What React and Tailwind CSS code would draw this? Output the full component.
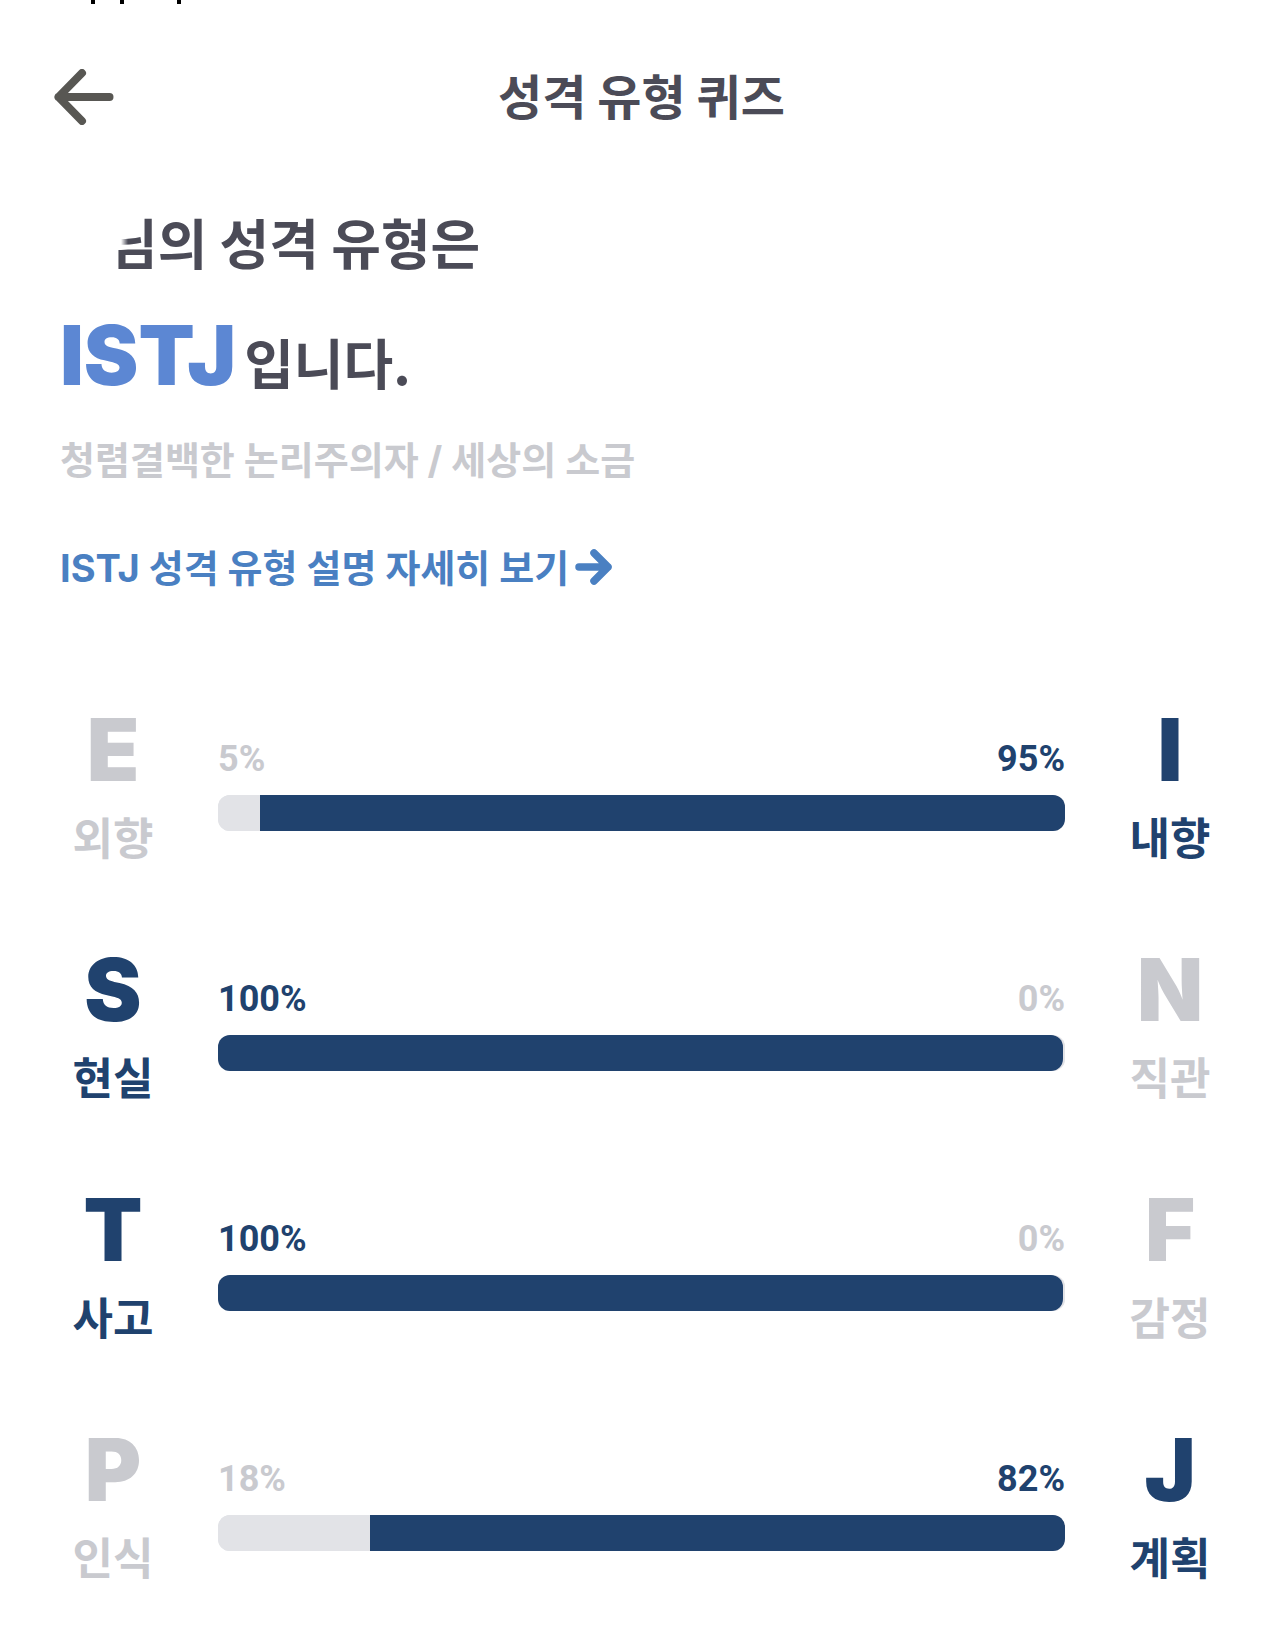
const traits = [
  { left: ["E", "외향", 5], right: ["I", "내향", 95] },
  { left: ["S", "현실", 100], right: ["N", "직관", 0] },
  { left: ["T", "사고", 100], right: ["F", "감정", 0] },
  { left: ["P", "인식", 18], right: ["J", "계획", 82] },
];

function tone(percent) {
  return percent >= 50 ? "text-[#20426e]" : "text-[#c9cacf]";
}

function Side({ letter, label, percent }) {
  return (
    <div className={`flex w-[106px] shrink-0 flex-col items-center ${tone(percent)}`}>
      <span className="font-[Inter,sans-serif] text-[86px] font-black leading-[84px]">{letter}</span>
      <span className="mt-4 text-[44px] font-bold leading-[56px]">{label}</span>
    </div>
  );
}

function TraitRow({ left, right }) {
  const leftFill = left[2] >= 50 ? "bg-[#20426e] rounded-r-xl" : "bg-[#e2e3e7]";
  const rightFill = right[2] >= 50 ? "bg-[#20426e]" : "bg-[#e2e3e7]";
  return (
    <li className="flex items-start gap-[52px]">
      <Side letter={left[0]} label={left[1]} percent={left[2]} />
      <div className="min-w-0 flex-1 pt-[29px]">
        <div className="flex justify-between font-[Roboto,sans-serif] text-[36px] font-bold leading-[44px]">
          <span className={tone(left[2])}>{left[2]}%</span>
          <span className={tone(right[2])}>{right[2]}%</span>
        </div>
        <div className="mt-3.5 flex h-9 overflow-hidden rounded-xl bg-[#e2e3e7]">
          <div className={leftFill} style={{ width: `${left[2]}%` }} />
          <div className={`min-w-0.5 flex-1 ${rightFill}`} />
        </div>
      </div>
      <Side letter={right[0]} label={right[1]} percent={right[2]} />
    </li>
  );
}

export default function App() {
  return (
    <div className="min-h-screen bg-white pb-8 font-['Noto_Sans_CJK_KR',sans-serif] text-[#4b4b57]">
      <svg className="ml-[91px] block" width="90" height="4" viewBox="0 0 90 4" aria-hidden="true">
        <path d="M0 0h4v4h-4zM29 0h4v4h-4zM86 0h4v4h-4z" fill="#000" />
      </svg>
      <header className="grid grid-cols-[60px_1fr_60px] items-center px-[54px] pt-[58px]">
        <button type="button" aria-label="뒤로" className="flex h-16 items-center">
          <svg width="60" height="56" viewBox="0 0 60 56" fill="none" stroke="#585753" strokeWidth="8" strokeLinecap="round" strokeLinejoin="round" aria-hidden="true">
            <path d="M55.500 28H4.500M28 4L4.500 28L28 52" />
            <path d="M4 28L14 18V38Z" fill="#585753" stroke="none" />
          </svg>
        </button>
        <h1 className="pb-1.5 text-center text-[48px] font-bold leading-[64px]">성격 유형 퀴즈</h1>
      </header>

      <main className="px-[60px] pt-[74px]">
        <h2 className="text-[54px] font-bold">
          <span className="relative block pl-12 leading-[72px]">
            님의 성격 유형은
            <span className="absolute left-10 top-0 h-11 w-7 bg-linear-to-r from-white from-75% to-transparent" />
          </span>
          <span className="mt-[30px] flex items-baseline gap-2 leading-[96px]">
            <span className="font-[Inter,sans-serif] text-[82px] font-black text-[#5c87d3]">ISTJ</span>
            <span>입니다.</span>
          </span>
        </h2>
        <p className="mt-[22px] font-[Inter,'Noto_Sans_CJK_KR',sans-serif] text-[38px] font-bold leading-[56px] text-[#c9cacf]">
          청렴결백한 논리주의자 / 세상의 소금
        </p>
        <a href="#istj" className="mt-[52px] inline-flex items-center gap-1.5 font-[Inter,'Noto_Sans_CJK_KR',sans-serif] text-[38px] font-bold leading-[56px] text-[#4a80c2]">
          <span>ISTJ 성격 유형 설명 자세히 보기</span>
          <svg width="38" height="44" viewBox="0 0 38 44" fill="none" stroke="currentColor" strokeWidth="7.5" strokeLinecap="round" strokeLinejoin="round" aria-hidden="true">
            <path d="M4 21H33M19 7L33 21L19 35" />
          </svg>
        </a>
        <ul className="mt-28 flex flex-col gap-[84px]">
          {traits.map((t) => (
            <TraitRow key={t.left[0]} {...t} />
          ))}
        </ul>
      </main>
    </div>
  );
}
